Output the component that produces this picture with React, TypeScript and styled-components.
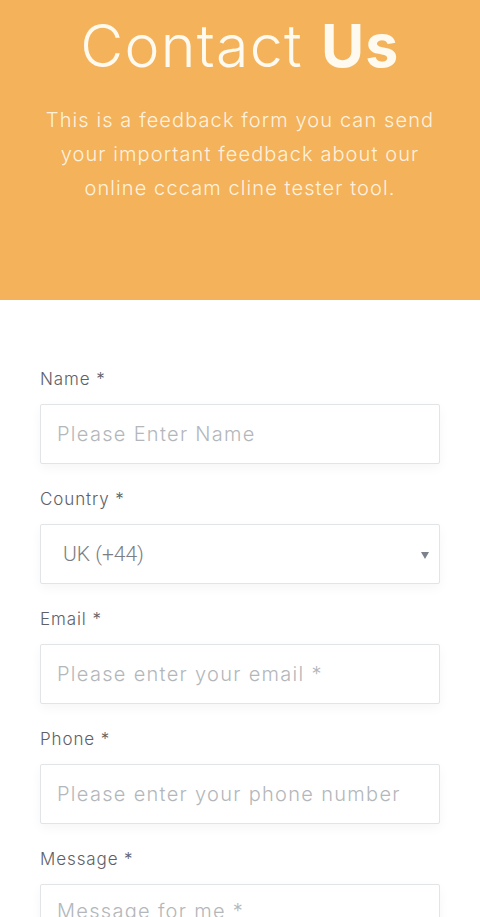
import styled, { createGlobalStyle } from "styled-components";

const GlobalStyle = createGlobalStyle`
  * { box-sizing: border-box; }
  body {
    margin: 0;
    background: #ffffff;
    font-family: Inter, "Noto Sans", sans-serif;
  }
`;

const fields = [
  { label: "Name *", placeholder: "Please Enter Name" },
  { label: "Email *", placeholder: "Please enter your email *" },
  { label: "Phone *", placeholder: "Please enter your phone number" },
];

export default function App() {
  return (
    <Page>
      <GlobalStyle />
      <Hero>
        <Title>
          Contact <strong>Us</strong>
        </Title>
        <Lead>
          This is a feedback form you can send your important feedback about
          our online cccam cline tester tool.
        </Lead>
      </Hero>
      <Card>
        <Field>
          <Label>{fields[0].label}</Label>
          <Input placeholder={fields[0].placeholder} />
        </Field>
        <Field>
          <Label>Country *</Label>
          <SelectBox>
            <SelectValue>UK (+44)</SelectValue>
            <Caret />
          </SelectBox>
        </Field>
        {fields.slice(1).map((f) => (
          <Field key={f.label}>
            <Label>{f.label}</Label>
            <Input placeholder={f.placeholder} />
          </Field>
        ))}
        <Field>
          <Label>Message *</Label>
          <TextArea placeholder="Message for me *" />
        </Field>
      </Card>
    </Page>
  );
}

const Page = styled.div`
  width: 480px;
  min-height: 917px;
  overflow: hidden;
`;

const Hero = styled.header`
  background: #f4b35b;
  height: 300px;
  padding: 10px 30px 0;
  text-align: center;
  color: #fffaf0;
`;

const Title = styled.h1`
  margin: 0;
  font-size: 59px;
  font-weight: 300;
  line-height: 72px;
  letter-spacing: 1.3px;

  strong {
    font-weight: 700;
  }
`;

const Lead = styled.p`
  margin: 21px 0 0;
  font-size: 20px;
  font-weight: 300;
  line-height: 34px;
  letter-spacing: 1.1px;
  color: rgba(255, 250, 238, 0.9);
`;

const Card = styled.main`
  margin-top: 40px;
  padding: 26px 40px 0;
  display: flex;
  flex-direction: column;
  gap: 22px;
  background: #fff;
  box-shadow: 0 30px 40px rgba(0, 0, 0, 0.025);
`;

const Field = styled.div`
  display: flex;
  flex-direction: column;
  gap: 12px;
`;

const Label = styled.label`
  font-size: 17px;
  font-weight: 300;
  line-height: 26px;
  letter-spacing: 0.9px;
  color: #5d6167;
`;

const boxStyle = `
  width: 400px;
  height: 60px;
  border: 1px solid #e2e5e8;
  border-radius: 2px;
  background: #fff;
  box-shadow: 0 4px 12px rgba(0, 0, 0, 0.04);
`;

const Input = styled.input`
  ${boxStyle}
  padding: 0 16px;
  font-family: inherit;
  font-size: 20px;
  font-weight: 300;
  letter-spacing: 1.3px;
  color: #444;
  outline: none;

  &::placeholder {
    color: #b3b7bb;
  }
`;

const TextArea = styled.textarea`
  ${boxStyle}
  height: 120px;
  padding: 14px 16px;
  resize: none;
  font-family: inherit;
  font-size: 20px;
  font-weight: 300;
  letter-spacing: 1.3px;
  outline: none;

  &::placeholder {
    color: #b3b7bb;
  }
`;

const SelectBox = styled.div`
  ${boxStyle}
  display: flex;
  align-items: center;
  justify-content: space-between;
  padding: 0 10px 0 22px;
`;

const SelectValue = styled.span`
  font-family: Roboto, sans-serif;
  font-size: 21px;
  font-weight: 300;
  color: #7b7e82;
`;

const Caret = styled.span`
  width: 0;
  height: 0;
  margin-top: 2px;
  border-left: 4px solid transparent;
  border-right: 4px solid transparent;
  border-top: 7px solid #7c828b;
`;
